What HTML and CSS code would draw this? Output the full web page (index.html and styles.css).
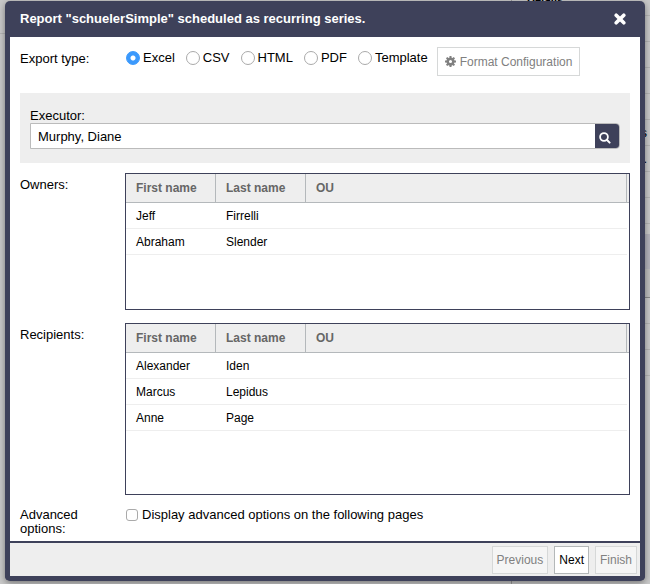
FILE: index.html
```html
<!DOCTYPE html>
<html lang="en">
<head>
    <meta charset="UTF-8">
    <meta name="viewport" content="width=device-width, initial-scale=1.0">
    <title>Schedule report</title>
    <link rel="stylesheet" href="styles.css">
</head>
<body>
    <!-- Dimmed page behind the dialog -->
    <div class="backdrop" aria-hidden="true">
        <div class="backdrop-left"></div>
        <div class="backdrop-list">
            <div class="backdrop-title">Details</div>
            <div class="backdrop-row"></div>
            <div class="backdrop-row"></div>
            <div class="backdrop-row"></div>
            <div class="backdrop-row"></div>
            <div class="backdrop-row">s</div>
            <div class="backdrop-row">.</div>
            <div class="backdrop-row"></div>
            <div class="backdrop-row"></div>
            <div class="backdrop-gap"></div>
            <div class="backdrop-selected"></div>
            <div class="backdrop-header"></div>
            <div class="backdrop-row"></div>
            <div class="backdrop-row"></div>
            <div class="backdrop-row"></div>
        </div>
    </div>

    <form class="dialog" role="dialog" aria-labelledby="dialog-title">
        <header class="dialog-header">
            <h1 class="dialog-title" id="dialog-title">Report "schuelerSimple" scheduled as recurring series.</h1>
            <button type="button" class="close-button" aria-label="Close">
                <svg width="12" height="12" viewBox="0 0 12 12">
                    <path d="M2.2 2.2l7.6 7.6M9.8 2.2L2.2 9.8" stroke="currentColor" stroke-width="3.6" stroke-linecap="round"/>
                </svg>
            </button>
        </header>

        <main class="dialog-content">
            <div class="form-row export-row" role="radiogroup" aria-labelledby="export-label">
                <span class="row-label" id="export-label">Export type:</span>
                <div class="export-types">
                    <label class="option"><input type="radio" name="export" checked>Excel</label>
                    <label class="option"><input type="radio" name="export">CSV</label>
                    <label class="option"><input type="radio" name="export">HTML</label>
                    <label class="option"><input type="radio" name="export">PDF</label>
                    <label class="option"><input type="radio" name="export">Template</label>
                </div>
                <button type="button" class="button format-button" disabled>
                    <svg width="11" height="11" viewBox="0 0 12 12">
                        <circle cx="6" cy="6" r="3.1" fill="none" stroke="currentColor" stroke-width="2.8"/>
                        <path d="M6 0v2.5M6 9.5V12M0 6h2.5M9.5 6H12M1.8 1.8l1.7 1.7M8.5 8.5l1.7 1.7M1.8 10.2l1.7-1.7M8.5 3.5l1.7-1.7" stroke="currentColor" stroke-width="2.2"/>
                    </svg>
                    Format Configuration
                </button>
            </div>

            <div class="executor">
                <label for="executor">Executor:</label>
                <div class="search-box">
                    <input type="text" id="executor" class="search-input" value="Murphy, Diane">
                    <button type="button" class="search-button" aria-label="Search">
                        <svg width="12" height="12" viewBox="0 0 12 12">
                            <circle cx="5" cy="5" r="3.9" fill="none" stroke="currentColor" stroke-width="1.8"/>
                            <path d="M7.8 7.8l2.8 2.8" stroke="currentColor" stroke-width="2" stroke-linecap="round"/>
                        </svg>
                    </button>
                </div>
            </div>

            <div class="form-row">
                <span class="row-label" id="owners-label">Owners:</span>
                <div class="table-box owners">
                    <table class="user-table" aria-labelledby="owners-label">
                        <thead>
                            <tr><th>First name</th><th>Last name</th><th>OU</th></tr>
                        </thead>
                        <tbody>
                            <tr><td>Jeff</td><td>Firrelli</td><td></td></tr>
                            <tr><td>Abraham</td><td>Slender</td><td></td></tr>
                        </tbody>
                    </table>
                </div>
            </div>

            <div class="form-row recipients-row">
                <span class="row-label" id="recipients-label">Recipients:</span>
                <div class="table-box recipients">
                    <table class="user-table" aria-labelledby="recipients-label">
                        <thead>
                            <tr><th>First name</th><th>Last name</th><th>OU</th></tr>
                        </thead>
                        <tbody>
                            <tr><td>Alexander</td><td>Iden</td><td></td></tr>
                            <tr><td>Marcus</td><td>Lepidus</td><td></td></tr>
                            <tr><td>Anne</td><td>Page</td><td></td></tr>
                        </tbody>
                    </table>
                </div>
            </div>

            <div class="form-row advanced-row">
                <span class="row-label">Advanced options:</span>
                <label class="option"><input type="checkbox">Display advanced options on the following pages</label>
            </div>
        </main>

        <footer class="dialog-footer">
            <button type="button" class="button" disabled>Previous</button>
            <button type="button" class="button">Next</button>
            <button type="button" class="button" disabled>Finish</button>
        </footer>
    </form>
</body>
</html>
```
FILE: styles.css
```css
* {
    box-sizing: border-box;
}

body {
    display: grid;
    min-height: 100vh;
    margin: 0;
    overflow: hidden;
    background-color: #c8c8c8;
    color: #000;
    font-family: "Liberation Sans", Arial, sans-serif;
    font-size: 13px;
    line-height: 14px;
}

button,
input {
    font: inherit;
}

svg {
    display: block;
}

/* Page behind the dialog */
.backdrop,
.dialog {
    grid-area: 1 / 1;
}

.backdrop {
    display: grid;
    grid-template-columns: 511px 1fr;
    height: 100vh;
    overflow: hidden;
}

.backdrop-left {
    height: 34px;
    border-bottom: 1px solid #b4b4b4;
}

.backdrop-list {
    border-left: 1px solid #999;
}

.backdrop-title {
    height: 16px;
    padding-left: 15px;
    border-bottom: 1px solid #b4b4b4;
    font-size: 11px;
    font-weight: bold;
    line-height: 0;
}

.backdrop-row {
    height: 26px;
    padding: 6px 3px;
    border-bottom: 1px solid #b4b4b4;
    text-align: right;
}

.backdrop-gap {
    height: 10px;
}

.backdrop-selected {
    height: 35px;
    background-color: #b3b2bb;
}

.backdrop-header {
    height: 29px;
    border-bottom: 1px solid #888;
    background-color: #bdbdbd;
}

/* Dialog */
.dialog {
    display: flex;
    flex-direction: column;
    margin: 1px 5px 3px;
    border: 5px solid #3e415a;
    border-top: none;
    border-radius: 5px;
    background-color: #fff;
    box-shadow: 0 2px 6px rgba(0, 0, 0, 0.4);
}

.dialog-header {
    display: flex;
    align-items: center;
    justify-content: space-between;
    height: 36px;
    padding: 0 14px 0 10px;
    background-color: #3e415a;
    color: #fff;
}

.dialog-title {
    margin: 0;
    font-size: 13px;
}

.close-button {
    padding: 0;
    border: none;
    background: none;
    color: #fff;
}

.dialog-content {
    flex: 1;
    padding: 10px 10px 5px;
}

.form-row {
    display: flex;
    align-items: flex-start;
    margin-bottom: 13px;
}

.row-label {
    flex: none;
    width: 105px;
    padding: 5px 20px 0 0;
}

.export-row {
    margin-bottom: 17px;
}

.export-types {
    display: flex;
    gap: 10px;
    padding-top: 4px;
}

.option {
    display: flex;
    align-items: center;
    gap: 3px;
}

.option input {
    flex: none;
    appearance: none;
    width: 14px;
    height: 14px;
    margin: 0 0 0 1px;
    border: 1px solid #aaa;
    border-radius: 50%;
    background-color: #fff;
}

.option input:checked {
    border-color: #3b99fc;
    background: radial-gradient(circle, #fff 2px, #3b99fc 3px);
}

.option input[type="checkbox"] {
    width: 12px;
    height: 12px;
    border-radius: 3px;
}

.button {
    height: 28px;
    padding: 0 4px;
    border: 1px solid #b4b8b9;
    background-color: #fff;
    color: #000;
    font-size: 12px;
}

.button:disabled {
    border-color: #d6d8d8;
    background-color: #f5f5f5;
    color: #808080;
}

.format-button,
.format-button:disabled {
    display: flex;
    align-items: center;
    gap: 4px;
    height: 29px;
    margin-left: 9px;
    padding: 0 7px;
    background-color: #fff;
}

/* Executor search */
.executor {
    margin-bottom: 10px;
    padding: 16px 10px 14px;
    background-color: #eee;
}

.search-box {
    display: flex;
    height: 26px;
    border: 1px solid #bbb;
    border-radius: 0 4px 4px 0;
    background-color: #fff;
    overflow: hidden;
}

.search-input {
    flex: 1;
    min-width: 0;
    padding: 2px 7px 0;
    border: none;
    background: none;
}

.search-button {
    display: grid;
    place-items: center;
    width: 24px;
    padding: 4px 4px 0 0;
    border: none;
    background-color: #3e415a;
    color: #fff;
}

.table-box {
    flex: 1;
    padding-right: 2px;
    border: 1px solid #3e415a;
    background: linear-gradient(#eee 28px, #b4b8bb 28px, #b4b8bb 29px, #fff 29px);
}

.owners {
    min-height: 137px;
}

.recipients {
    min-height: 172px;
}

.user-table {
    width: 100%;
    border-collapse: separate;
    border-spacing: 0;
    table-layout: fixed;
    font-size: 12px;
}

.user-table th,
.user-table td {
    padding: 0 10px;
    text-align: left;
}

.user-table th {
    width: 90px;
    height: 29px;
    border-right: 1px solid #b4b8bb;
    border-bottom: 1px solid #b4b8bb;
    background-color: #eee;
    color: #666;
}

.user-table th:last-child {
    width: auto;
}

.user-table td {
    height: 26px;
    border-bottom: 1px solid #eee;
}

.recipients-row {
    margin-bottom: 8px;
}

.advanced-row {
    margin-bottom: 0;
}

.advanced-row .option {
    gap: 4px;
    padding-top: 5px;
}

.dialog-footer {
    display: flex;
    justify-content: flex-end;
    gap: 6px;
    padding: 3px 3px 2px;
    border-top: 2px solid #3e415a;
    background-color: #eee;
}
```
